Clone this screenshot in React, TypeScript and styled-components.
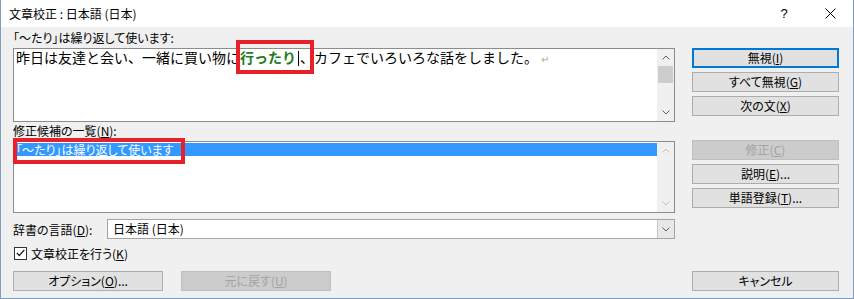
import React from "react";
import styled, { createGlobalStyle, css } from "styled-components";

const Global = createGlobalStyle`
  html, body { margin: 0; padding: 0; background: #ffffff; }
  body { font-family: "Noto Sans CJK JP", "Noto Sans", sans-serif; }
  * { box-sizing: border-box; }
`;

const UI_FONT = `"Noto Sans CJK JP", "Noto Sans", sans-serif`;

const Window = styled.div`
  position: relative;
  width: 854px;
  height: 299px;
  background: #f0f0f0;
  border-left: 1px solid #7f9dbf;
  border-right: 1px solid #7f9dbf;
  border-bottom: 1px solid #7f9dbf;
  font-family: ${UI_FONT};
  font-size: 12px;
  color: #000;
  overflow: hidden;
`;

const TitleBar = styled.div`
  height: 27px;
  background: #ffffff;
  display: flex;
  align-items: center;
  justify-content: space-between;
  padding-left: 8px;
`;

const Title = styled.div`
  font-size: 12px;
  line-height: 16px;
  font-feature-settings: "palt";
`;

const TitleButtons = styled.div`
  display: flex;
  align-items: center;
  height: 100%;
`;

const TitleButton = styled.div`
  width: 46px;
  height: 100%;
  display: flex;
  align-items: center;
  justify-content: center;
  font-family: "Liberation Sans", sans-serif;
  font-size: 13px;
`;

const Body = styled.div`
  display: flex;
  gap: 17px;
  padding-left: 12px;
`;

const LeftCol = styled.div`
  width: 662px;
  display: flex;
  flex-direction: column;
`;

const RightCol = styled.div`
  width: 147px;
  display: flex;
  flex-direction: column;
  padding-top: 21px;
`;

const Label = styled.div<{ $mt?: number }>`
  margin-top: ${(p) => p.$mt ?? 0}px;
  height: 16px;
  line-height: 16px;
  font-size: 12px;
  font-feature-settings: "palt";
  white-space: nowrap;
`;

const Acc = styled.span`
  text-decoration: underline;
  text-underline-offset: 1px;
`;

const EditBox = styled.div<{ $mt?: number; $h: number }>`
  margin-top: ${(p) => p.$mt ?? 0}px;
  height: ${(p) => p.$h}px;
  background: #ffffff;
  border: 1px solid #8c8c8c;
  display: flex;
`;

const EditContent = styled.div`
  flex: 1;
  min-width: 0;
  padding: 0 0 0 2px;
  font-size: 14px;
  line-height: 18px;
  margin-top: -1px;
  white-space: nowrap;
`;

const Flagged = styled.span`
  color: #1d7d1d;
  font-weight: bold;
`;

const Caret = styled.span`
  display: inline-block;
  width: 1px;
  height: 15px;
  background: #000;
  vertical-align: -3px;
  margin: 0 1px 0 2px;
`;

const ReturnMark = styled.span`
  color: #a8a8a8;
  font-size: 10px;
  margin-left: 3px;
`;

const Scrollbar = styled.div`
  width: 17px;
  flex-shrink: 0;
  background: #f0f0f0;
  display: flex;
  flex-direction: column;
`;

const ScrollArrow = styled.div<{ $faded?: boolean }>`
  height: 17px;
  display: flex;
  align-items: center;
  justify-content: center;
  color: ${(p) => (p.$faded ? "#bfbfbf" : "#606060")};
`;

const ScrollTrack = styled.div`
  flex: 1;
  display: flex;
  flex-direction: column;
`;

const ScrollThumb = styled.div`
  height: 17px;
  margin: 0 1px;
  background: #cdcdcd;
`;

const ListContent = styled.div`
  flex: 1;
  padding-top: 1px;
`;

const ListRow = styled.div<{ $selected?: boolean }>`
  height: 13px;
  line-height: 13px;
  font-size: 12px;
  font-feature-settings: "palt";
  padding-left: 2px;
  white-space: nowrap;
  ${(p) =>
    p.$selected &&
    css`
      background: #3399ff;
      color: #ffffff;
    `}
`;

const ComboRow = styled.div`
  margin-top: 6px;
  height: 20px;
  display: flex;
  align-items: center;
`;

const ComboLabel = styled.div`
  width: 94px;
  font-size: 12px;
  font-feature-settings: "palt";
  white-space: nowrap;
`;

const Combo = styled.div`
  flex: 1;
  height: 20px;
  background: #ffffff;
  border: 1px solid #a3a3a3;
  display: flex;
  align-items: center;
`;

const ComboText = styled.div`
  flex: 1;
  padding-left: 5px;
  font-size: 12px;
  line-height: 16px;
`;

const ComboButton = styled.div`
  width: 17px;
  height: 100%;
  background: #e8e8e8;
  border-left: 1px solid #c8c8c8;
  display: flex;
  align-items: center;
  justify-content: center;
  color: #606060;
`;

const CheckRow = styled.div`
  margin-top: 6px;
  height: 16px;
  display: flex;
  align-items: center;
  gap: 4px;
  padding-left: 1px;
  font-size: 12px;
  font-feature-settings: "palt";
`;

const CheckBox = styled.div`
  width: 13px;
  height: 13px;
  background: #ffffff;
  border: 1px solid #333333;
  display: flex;
  align-items: center;
  justify-content: center;
`;

const ButtonRow = styled.div`
  margin-top: 10px;
  display: flex;
  gap: 18px;
`;

const Button = styled.div<{
  $mt?: number;
  $w?: number;
  $default?: boolean;
  $disabled?: boolean;
}>`
  margin-top: ${(p) => p.$mt ?? 0}px;
  width: ${(p) => (p.$w ? `${p.$w}px` : "100%")};
  height: 20px;
  background: #e1e1e1;
  border: 1px solid #adadad;
  display: flex;
  align-items: center;
  justify-content: center;
  font-size: 12px;
  line-height: 16px;
  font-feature-settings: "palt";
  white-space: nowrap;
  ${(p) =>
    p.$default &&
    css`
      border-color: #0078d7;
      box-shadow: inset 0 0 0 1px #0078d7;
    `}
  ${(p) =>
    p.$disabled &&
    css`
      background: #cccccc;
      border-color: #bfbfbf;
      color: #a3a3a3;
    `}
`;

const Highlight = styled.div<{ $x: number; $y: number; $w: number; $h: number }>`
  position: absolute;
  left: ${(p) => p.$x}px;
  top: ${(p) => p.$y}px;
  width: ${(p) => p.$w}px;
  height: ${(p) => p.$h}px;
  border: 4px solid #e8202a;
  pointer-events: none;
`;

const Chevron = ({ up }: { up?: boolean }) => (
  <svg width="8" height="5" viewBox="0 0 8 5">
    <polyline
      points={up ? "0.5,4.5 4,1 7.5,4.5" : "0.5,0.5 4,4 7.5,0.5"}
      fill="none"
      stroke="currentColor"
      strokeWidth="1"
    />
  </svg>
);

const CloseIcon = () => (
  <svg width="11" height="11" viewBox="0 0 11 11">
    <path d="M0.5 0.5 L10.5 10.5 M10.5 0.5 L0.5 10.5" stroke="#000" strokeWidth="1" />
  </svg>
);

const CheckMark = () => (
  <svg width="9" height="8" viewBox="0 0 9 8">
    <polyline points="0.8,4 3.3,6.5 8.3,1" fill="none" stroke="#222" strokeWidth="1.3" />
  </svg>
);

export default function App() {
  return (
    <>
      <Global />
      <Window>
        <TitleBar>
          <Title>文章校正 : 日本語 (日本)</Title>
          <TitleButtons>
            <TitleButton>?</TitleButton>
            <TitleButton>
              <CloseIcon />
            </TitleButton>
          </TitleButtons>
        </TitleBar>
        <Body>
          <LeftCol>
            <Label $mt={3}>「～たり」は繰り返して使います:</Label>
            <EditBox $mt={2} $h={74}>
              <EditContent>
                昨日は友達と会い、一緒に買い物に<Flagged>行ったり</Flagged>
                <Caret />、カフェでいろいろな話をしました。<ReturnMark>↵</ReturnMark>
              </EditContent>
              <Scrollbar>
                <ScrollArrow>
                  <Chevron up />
                </ScrollArrow>
                <ScrollTrack>
                  <ScrollThumb />
                </ScrollTrack>
                <ScrollArrow>
                  <Chevron />
                </ScrollArrow>
              </Scrollbar>
            </EditBox>
            <Label $mt={1}>
              修正候補の一覧(<Acc>N</Acc>):
            </Label>
            <EditBox $mt={2} $h={72}>
              <ListContent>
                <ListRow $selected>「～たり」は繰り返して使います</ListRow>
              </ListContent>
              <Scrollbar>
                <ScrollArrow $faded>
                  <Chevron up />
                </ScrollArrow>
                <ScrollTrack />
                <ScrollArrow $faded>
                  <Chevron />
                </ScrollArrow>
              </Scrollbar>
            </EditBox>
            <ComboRow>
              <ComboLabel>
                辞書の言語(<Acc>D</Acc>):
              </ComboLabel>
              <Combo>
                <ComboText>日本語 (日本)</ComboText>
                <ComboButton>
                  <Chevron />
                </ComboButton>
              </Combo>
            </ComboRow>
            <CheckRow>
              <CheckBox>
                <CheckMark />
              </CheckBox>
              <span>
                文章校正を行う(<Acc>K</Acc>)
              </span>
            </CheckRow>
            <ButtonRow>
              <Button $w={150}>
                オプション(<Acc>O</Acc>)...
              </Button>
              <Button $w={150} $disabled>
                元に戻す(<Acc>U</Acc>)
              </Button>
            </ButtonRow>
          </LeftCol>
          <RightCol>
            <Button $default>
              無視(<Acc>I</Acc>)
            </Button>
            <Button $mt={4}>
              すべて無視(<Acc>G</Acc>)
            </Button>
            <Button $mt={4}>
              次の文(<Acc>X</Acc>)
            </Button>
            <Button $mt={24} $disabled>
              修正(<Acc>C</Acc>)
            </Button>
            <Button $mt={4}>
              説明(<Acc>E</Acc>)...
            </Button>
            <Button $mt={4}>
              単語登録(<Acc>T</Acc>)...
            </Button>
            <Button $mt={63}>キャンセル</Button>
          </RightCol>
        </Body>
        <Highlight $x={235} $y={40} $w={78} $h={34} />
        <Highlight $x={12} $y={138} $w={172} $h={26} />
      </Window>
    </>
  );
}
